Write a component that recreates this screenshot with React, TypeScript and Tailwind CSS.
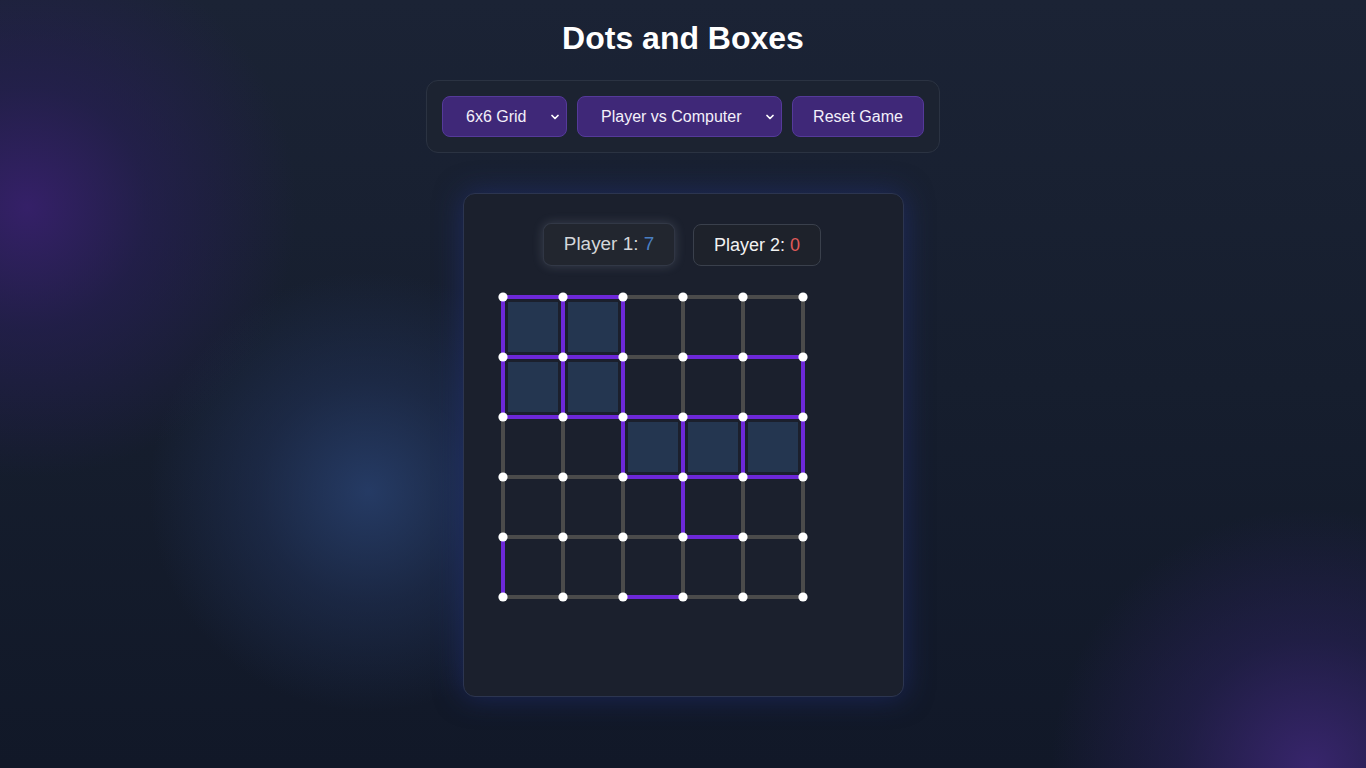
import { ChevronDown } from "lucide-react";

const GAP = 60;
const OFF = 5;
const PURPLE = "#6d28d9";
const GRAY = "#4b4b4b";

// [row, col] for horizontal edges, "p" = taken
const hEdges = [
	"pp...",
	"pp.pp",
	"ppppp",
	"..ppp",
	"...p.",
	"..p..",
];
const vEdges = [
	"ppp...",
	"ppp..p",
	"..pppp",
	"...p..",
	"p.....",
];
const boxes = [
	[0, 0],
	[0, 1],
	[1, 0],
	[1, 1],
	[2, 2],
	[2, 3],
	[2, 4],
];

const Board = () => (
	<svg width="310" height="310" viewBox="0 0 310 310" className="block">
		{boxes.map(([r, c]) => (
			<rect
				key={`b${r}${c}`}
				x={OFF + c * GAP + 5}
				y={OFF + r * GAP + 5}
				width={50}
				height={50}
				fill="#243650"
			/>
		))}
		{hEdges.map((row, r) =>
			row.split("").map((s, c) => (
				<line
					key={`h${r}${c}`}
					x1={OFF + c * GAP}
					y1={OFF + r * GAP}
					x2={OFF + (c + 1) * GAP}
					y2={OFF + r * GAP}
					stroke={s === "p" ? PURPLE : GRAY}
					strokeWidth={4}
				/>
			)),
		)}
		{vEdges.map((row, r) =>
			row.split("").map((s, c) => (
				<line
					key={`v${r}${c}`}
					x1={OFF + c * GAP}
					y1={OFF + r * GAP}
					x2={OFF + c * GAP}
					y2={OFF + (r + 1) * GAP}
					stroke={s === "p" ? PURPLE : GRAY}
					strokeWidth={4}
				/>
			)),
		)}
		{Array.from({ length: 6 }).map((_, r) =>
			Array.from({ length: 6 }).map((_, c) => (
				<circle
					key={`d${r}${c}`}
					cx={OFF + c * GAP}
					cy={OFF + r * GAP}
					r={4.6}
					fill="#ffffff"
				/>
			)),
		)}
	</svg>
);

const Select = ({ label, width }: { label: string; width: string }) => (
	<div className={`relative h-[41px] ${width}`}>
		<select className="h-full w-full appearance-none rounded-lg border border-[#553a9a] bg-[#3f2878] pl-[23px] pr-6 text-left text-[16px] text-[#f3f0fa] outline-none">
			<option>{label}</option>
		</select>
		<ChevronDown
			size={12}
			strokeWidth={3.5}
			className="pointer-events-none absolute right-[6px] top-[15px] text-white"
		/>
	</div>
);

export default function App() {
	return (
		<div
			className="min-h-screen w-full bg-[radial-gradient(circle_at_2%_27%,rgba(56,32,110,0.9)_0px,rgba(42,30,92,0.55)_120px,transparent_270px),radial-gradient(circle_at_27%_64%,rgba(40,64,110,0.85)_0px,rgba(34,52,92,0.5)_110px,transparent_220px),radial-gradient(circle_at_96%_100%,rgba(58,38,112,0.95)_0px,rgba(45,34,95,0.5)_130px,transparent_260px),linear-gradient(180deg,#1b2335_0%,#161e2e_50%,#111828_100%)] pt-[19px] text-white"
			style={{ fontFamily: '"Liberation Sans", Arial, sans-serif' }}
		>
			<h1 className="text-center text-[32px] font-bold leading-[38px] text-white">
				Dots and Boxes
			</h1>

			<div className="mx-auto mt-[23px] flex w-[514px] gap-[10px] rounded-xl border border-[#2b3342] bg-[#1c2331] p-[15px]">
				<Select label="6x6 Grid" width="w-[125px]" />
				<Select label="Player vs Computer" width="w-[205px]" />
				<button
					type="button"
					className="h-[41px] w-[132px] rounded-lg border border-[#553a9a] bg-[#3f2878] text-[16px] text-[#f3f0fa]"
				>
					Reset Game
				</button>
			</div>

			<div className="mx-auto mt-[40px] h-[504px] w-[441px] rounded-xl border border-[#2c3550] bg-[#1b202d] pl-[34px] pr-[35px] pt-[30px] shadow-[0_0_28px_rgba(35,50,130,0.55)]">
				<div className="ml-[2px] flex items-end justify-center gap-[21px]">
					<div className="mb-[1px] flex h-[41px] w-[126px] scale-[1.05] items-center justify-center rounded-lg border border-[#323846] bg-[#22262f] text-[18px] text-[#d4d6da] shadow-[0_0_10px_rgba(200,210,230,0.18)]">
						Player 1:&nbsp;<span className="text-[#4a7fc2]">7</span>
					</div>
					<div className="flex h-[42px] w-[128px] items-center justify-center rounded-lg border border-[#3a404c] bg-[#1e222b] text-[18px] text-[#f2f2f2]">
						Player 2:&nbsp;<span className="text-[#e05a5a]">0</span>
					</div>
				</div>
				<div className="mt-[26px]">
					<Board />
				</div>
			</div>
		</div>
	);
}
